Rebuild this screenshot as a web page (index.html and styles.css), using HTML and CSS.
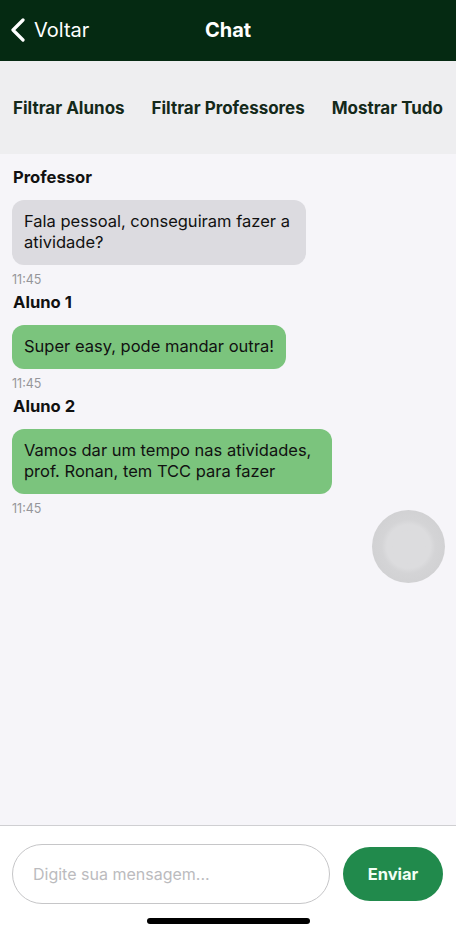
FILE: index.html
```html
<!DOCTYPE html>
<html lang="pt-BR">
<head>
<meta charset="utf-8">
<title>Chat</title>
<link rel="stylesheet" href="styles.css">
</head>
<body>
<div class="screen">
  <header class="topbar">
    <a class="back">
      <svg class="chev" width="16" height="24" viewBox="0 0 16 24"><path d="M13 2 L3 12 L13 22" fill="none" stroke="#fff" stroke-width="3.2" stroke-linecap="round" stroke-linejoin="round"/></svg>
      <span>Voltar</span>
    </a>
    <div class="title">Chat</div>
  </header>
  <nav class="filters">
    <span class="filter">Filtrar Alunos</span>
    <span class="filter">Filtrar Professores</span>
    <span class="filter">Mostrar Tudo</span>
  </nav>
  <main class="messages">
    <div class="msg">
      <div class="sender">Professor</div>
      <div class="bubble gray">Fala pessoal, conseguiram fazer a atividade?</div>
      <div class="time">11:45</div>
    </div>
    <div class="msg">
      <div class="sender">Aluno 1</div>
      <div class="bubble green">Super easy, pode mandar outra!</div>
      <div class="time">11:45</div>
    </div>
    <div class="msg">
      <div class="sender">Aluno 2</div>
      <div class="bubble green">Vamos dar um tempo nas atividades, prof. Ronan, tem TCC para fazer</div>
      <div class="time">11:45</div>
    </div>
    <div class="float-btn"><div class="float-inner"></div></div>
  </main>
  <footer class="composer">
    <div class="row">
      <div class="input">Digite sua mensagem...</div>
      <button class="send">Enviar</button>
    </div>
    <div class="home-ind"></div>
  </footer>
</div>
</body>
</html>
```
FILE: styles.css
```css
* { box-sizing: border-box; }
html, body { margin: 0; padding: 0; }
body {
  font-family: Inter, "Noto Sans", sans-serif;
  background: #f6f5f9;
}
.screen {
  width: 456px;
  height: 934px;
  display: flex;
  flex-direction: column;
  overflow: hidden;
}
.topbar {
  height: 61px;
  background: #052a12;
  position: relative;
  display: flex;
  align-items: center;
  color: #fff;
  flex-shrink: 0;
}
.back {
  display: flex;
  align-items: center;
  gap: 8px;
  padding-left: 10px;
  font-size: 20px;
  padding-bottom: 2px;
}
.chev { display: block; }
.title {
  position: absolute;
  left: 0; right: 0;
  text-align: center;
  font-weight: 700;
  font-size: 20px;
  pointer-events: none;
  padding-bottom: 2px;
}
.filters {
  height: 93px;
  background: #eeeef0;
  display: flex;
  justify-content: space-between;
  align-items: center;
  padding: 0 13px;
  flex-shrink: 0;
}
.filter {
  font-weight: 700;
  font-size: 17px;
  color: #14291a;
}
.messages {
  flex: 1;
  position: relative;
  padding: 12px 12px 0;
  background: #f6f5f9;
}
.msg { display: flex; flex-direction: column; align-items: flex-start; }
.sender {
  font-weight: 700;
  font-size: 16.6px;
  color: #111;
  padding-left: 1px;
  line-height: 22px;
  margin-bottom: 12px;
}
.bubble {
  font-size: 16.5px;
  line-height: 21px;
  color: #111;
  padding: 11px 12px 12px;
  border-radius: 12px;
  max-width: 320px;
}
.bubble.gray { background: #dcdbe0; max-width: 294px; }
.bubble.green { background: #7bc47d; }
.time {
  font-size: 12.5px;
  color: #95959a;
  margin-top: 7px;
  line-height: 16px;
  margin-bottom: 3px;
}
.float-btn {
  position: absolute;
  left: 372px;
  top: 356px;
  width: 73px;
  height: 73px;
  border-radius: 50%;
  background: radial-gradient(circle, #dcdcde 0, #dcdcde 42%, #d4d4d6 52%, #cdcdcf 100%);
  display: flex;
  align-items: center;
  justify-content: center;
}
.float-inner {
  width: 34px; height: 34px;
  border-radius: 50%;
  background: #dcdcde;
}
.composer {
  height: 109px;
  background: #fff;
  border-top: 1px solid #cfcfd2;
  flex-shrink: 0;
  padding: 18px 12px 0;
}
.row { display: flex; align-items: center; gap: 13px; }
.input {
  width: 318px;
  height: 60px;
  border: 1px solid #c6c6c8;
  border-radius: 30px;
  display: flex;
  align-items: center;
  padding-left: 20px;
  font-size: 16px;
  color: #bbbbbe;
}
.send {
  width: 100px;
  height: 54px;
  border: none;
  border-radius: 27px;
  background: #218a4c;
  color: #f2fff5;
  font-family: inherit;
  font-weight: 700;
  font-size: 16.5px;
}
.home-ind {
  width: 163px;
  height: 6px;
  border-radius: 3px;
  background: #000;
  margin: 14px auto 0 135px;
}
```
